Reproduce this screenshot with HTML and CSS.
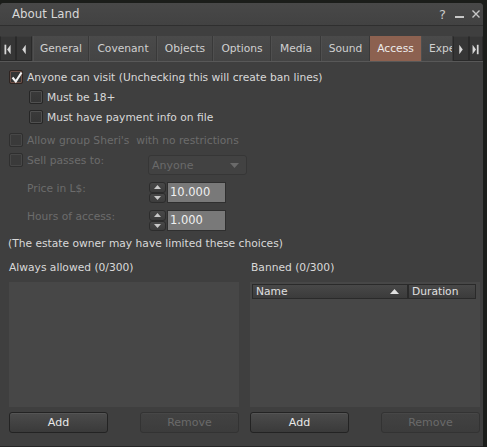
FILE: index.html
```html
<!DOCTYPE html>
<html>
<head>
<meta charset="utf-8">
<link rel="stylesheet" href="styles.css">
</head>
<body>
<div class="window">
  <div class="titlebar">
    <span class="title">About Land</span>
    <span class="tb-icons">
      <span class="tb-help">?</span>
      <svg class="tb-min" width="10" height="10" viewBox="0 0 10 10"><rect x="0" y="7" width="9" height="2" fill="#c8c8c8"/></svg>
      <svg class="tb-close" width="10" height="10" viewBox="0 0 10 10"><path d="M1.5 1.5 L8.5 8.5 M8.5 1.5 L1.5 8.5" stroke="#c8c8c8" stroke-width="1.4"/></svg>
    </span>
  </div>

  <div class="tabbar">
    <div class="tab-arrow">
      <svg width="16" height="25" viewBox="0 0 16 25"><rect x="4" y="7" width="2" height="11" fill="#d8d8d8"/><path d="M11 7 L7 12.5 L11 18 Z" fill="#d8d8d8"/></svg>
    </div>
    <div class="tab-arrow">
      <svg width="16" height="25" viewBox="0 0 16 25"><path d="M10 7 L6 12.5 L10 18 Z" fill="#d8d8d8"/></svg>
    </div>
    <div class="tabs">
      <div class="tab t-general">General</div>
      <div class="tab t-covenant">Covenant</div>
      <div class="tab t-objects">Objects</div>
      <div class="tab t-options">Options</div>
      <div class="tab t-media">Media</div>
      <div class="tab t-sound">Sound</div>
      <div class="tab t-access active">Access</div>
      <div class="tab t-exp">Expe</div>
    </div>
    <div class="tab-arrow">
      <svg width="16" height="25" viewBox="0 0 16 25"><path d="M6 7 L10 12.5 L6 18 Z" fill="#d8d8d8"/></svg>
    </div>
    <div class="tab-arrow last">
      <svg width="14" height="25" viewBox="0 0 14 25"><path d="M3 7 L7 12.5 L3 18 Z" fill="#d8d8d8"/><rect x="8" y="7" width="2" height="11" fill="#d8d8d8"/></svg>
    </div>
  </div>

  <div class="content">
    <div class="row r1">
      <span class="cb checked">
        <svg width="14" height="14" viewBox="0 0 14 14"><path d="M2.5 6.5 L5.8 10.5 L11.5 1.5" fill="none" stroke="#f2f2f2" stroke-width="2.1"/></svg>
      </span>
      <span class="label">Anyone can visit (Unchecking this will create ban lines)</span>
    </div>
    <div class="row indent">
      <span class="cb"></span>
      <span class="label">Must be 18+</span>
    </div>
    <div class="row indent">
      <span class="cb"></span>
      <span class="label">Must have payment info on file</span>
    </div>
    <div class="row r4 disabled">
      <span class="cb"></span>
      <span class="label">Allow group Sheri's&nbsp; with no restrictions</span>
    </div>
    <div class="sell-row disabled">
      <div class="sell-left">
        <span class="cb"></span>
        <span class="label">Sell passes to:</span>
      </div>
      <div class="combo">
        <span>Anyone</span>
        <svg width="9" height="5" viewBox="0 0 9 5"><path d="M0 0 L9 0 L4.5 5 Z" fill="#6a6a6a"/></svg>
      </div>
    </div>
    <div class="field-row price">
      <span class="field-label">Price in L$:</span>
      <div class="spinner">
        <span class="spin-btn"><svg width="7" height="4" viewBox="0 0 7 4"><path d="M0 4 L3.5 0 L7 4 Z" fill="#c8c8c8"/></svg></span>
        <span class="spin-btn"><svg width="7" height="4" viewBox="0 0 7 4"><path d="M0 0 L7 0 L3.5 4 Z" fill="#c8c8c8"/></svg></span>
      </div>
      <div class="num-input">10.000</div>
    </div>
    <div class="field-row hours">
      <span class="field-label">Hours of access:</span>
      <div class="spinner">
        <span class="spin-btn"><svg width="7" height="4" viewBox="0 0 7 4"><path d="M0 4 L3.5 0 L7 4 Z" fill="#c8c8c8"/></svg></span>
        <span class="spin-btn"><svg width="7" height="4" viewBox="0 0 7 4"><path d="M0 0 L7 0 L3.5 4 Z" fill="#c8c8c8"/></svg></span>
      </div>
      <div class="num-input">1.000</div>
    </div>
    <div class="note">(The estate owner may have limited these choices)</div>

    <div class="lists">
      <div class="list-col">
        <div class="list-title">Always allowed (0/300)</div>
        <div class="listbox"></div>
        <div class="btn-row">
          <div class="btn">Add</div>
          <div class="btn disabled-btn">Remove</div>
        </div>
      </div>
      <div class="list-col right">
        <div class="list-title">Banned (0/300)</div>
        <div class="listbox">
          <div class="list-header">
            <div class="col-name">
              <span>Name</span>
              <svg width="9" height="5" viewBox="0 0 9 5"><path d="M0 5 L4.5 0 L9 5 Z" fill="#e0e0e0"/></svg>
            </div>
            <div class="col-dur">Duration</div>
          </div>
        </div>
        <div class="btn-row">
          <div class="btn">Add</div>
          <div class="btn disabled-btn">Remove</div>
        </div>
      </div>
    </div>
  </div>
</div>
</body>
</html>
```

FILE: styles.css
```css
html, body {
  margin: 0;
  padding: 0;
}
body {
  background: #1b1d1a;
  width: 487px;
  height: 447px;
  overflow: hidden;
  font-family: "DejaVu Sans", "Liberation Sans", sans-serif;
  font-size: 10.7px;
  color: #d9d9d9;
}
.window {
  margin-top: 3px;
  width: 483px;
  height: 444px;
  background: #3f3f3f;
  border-radius: 4px 4px 0 0;
  display: flex;
  flex-direction: column;
  box-sizing: border-box;
  border-bottom: 1px solid #262626;
  overflow: hidden;
}
.titlebar {
  height: 22px;
  flex: none;
  display: flex;
  align-items: center;
  justify-content: space-between;
  padding-left: 12px;
  padding-right: 2px;
  background: linear-gradient(#484848, #424242);
  border-bottom: 1px solid #2f2f2f;
}
.title {
  font-size: 11.8px;
  color: #d8d8d8;
}
.tb-icons {
  display: flex;
  align-items: center;
}
.tb-help {
  font-size: 13px;
  color: #c8c8c8;
  margin-right: 9px;
}
.tb-min {
  margin-right: 6px;
}

.tabbar {
  margin-top: 10px;
  height: 25px;
  flex: none;
  display: flex;
  border-bottom: 1px solid #585858;
  background: #444;
}
.tab-arrow {
  width: 16px;
  height: 25px;
  flex: none;
  background: #363636;
  box-sizing: border-box;
  border: 1px solid #2a2a2a;
  border-top-color: #3c3c3c;
  display: flex;
}
.tab-arrow.last {
  width: 14px;
}
.tab-arrow svg {
  display: block;
}
.tabs {
  flex: 1;
  display: flex;
  overflow: hidden;
  padding-left: 1px;
}
.tab {
  flex: none;
  height: 25px;
  line-height: 25px;
  text-align: center;
  color: #d0d0d0;
  background: linear-gradient(#4a4a4a, #444444);
  box-sizing: border-box;
  border-right: 1px solid #393939;
  border-left: 1px solid #4f4f4f;
  white-space: nowrap;
}
.tab.active {
  background: #8c6150;
  border-color: #8c6150;
  color: #ececec;
}
.t-general { width: 56px; }
.t-covenant { width: 68px; }
.t-objects { width: 56px; }
.t-options { width: 58px; }
.t-media { width: 50px; }
.t-sound { width: 49px; }
.t-access { width: 51px; }
.t-exp { width: 32px; text-align: left; padding-left: 7px; overflow: hidden; }

.content {
  flex: 1;
  display: flex;
  flex-direction: column;
}
.row {
  height: 20px;
  display: flex;
  align-items: center;
  padding-left: 9px;
}
.row.r1 {
  margin-top: 5px;
}
.row.indent {
  padding-left: 29px;
}
.row.r4 {
  margin-top: 3px;
}
.cb {
  width: 14px;
  height: 14px;
  flex: none;
  box-sizing: border-box;
  border: 1px solid #262626;
  background: linear-gradient(#3a3a3a, #353535);
  box-shadow: inset 0 0 0 1px #505050;
  border-radius: 2px;
  display: flex;
}
.cb.checked {
  border-color: #2e2421;
  box-shadow: inset 0 0 0 1px #6e5047;
  background: #343434;
  overflow: visible;
}
.cb svg {
  display: block;
  overflow: visible;
}
.label {
  margin-left: 4px;
  white-space: nowrap;
}
.disabled .label,
.disabled .field-label {
  color: #6c6c6c;
}
.disabled .cb {
  border-color: #2f2f2f;
  box-shadow: inset 0 0 0 1px #474747;
  background: #3a3a3a;
}
.sell-row {
  height: 26px;
  display: flex;
  align-items: flex-start;
  padding-left: 9px;
}
.sell-left {
  width: 139px;
  display: flex;
  align-items: center;
  height: 14px;
  margin-top: 3px;
}
.combo {
  width: 99px;
  height: 20px;
  margin-top: 5px;
  box-sizing: border-box;
  border: 1px solid #363636;
  border-radius: 3px;
  background: #424242;
  color: #6a6a6a;
  display: flex;
  align-items: center;
  justify-content: space-between;
  padding: 0 7px 0 3px;
  font-size: 11px;
}
.field-row {
  height: 21px;
  display: flex;
  align-items: flex-start;
  padding-left: 27px;
}
.field-row.price {
  margin-top: 6px;
}
.field-row.hours {
  margin-top: 7px;
}
.field-label {
  width: 122px;
  line-height: 13px;
  color: #6c6c6c;
}
.spinner {
  width: 17px;
  height: 21px;
  display: flex;
  flex-direction: column;
  margin-right: 1px;
}
.spin-btn {
  flex: 1;
  box-sizing: border-box;
  border: 1px solid #2c2c2c;
  border-radius: 3px;
  background: linear-gradient(#484848, #3c3c3c);
  display: flex;
  align-items: center;
  justify-content: center;
}
.num-input {
  width: 59px;
  height: 21px;
  box-sizing: border-box;
  border: 1px solid #2f2f2f;
  background: #797979;
  color: #f0f0f0;
  font-size: 11.5px;
  line-height: 19px;
  padding-left: 2px;
}
.note {
  margin-top: 6px;
  line-height: 14px;
  padding-left: 8px;
}
.lists {
  margin-top: 10px;
  display: flex;
  padding-left: 9px;
  gap: 11px;
}
.list-col {
  width: 230px;
  display: flex;
  flex-direction: column;
}
.list-title {
  line-height: 14px;
  height: 14px;
}
.list-col.right .list-title {
  padding-left: 1px;
}
.listbox {
  margin-top: 7px;
  height: 125px;
  background: #474747;
  padding: 2px 4px 0 2px;
  box-sizing: border-box;
}
.list-header {
  height: 15px;
  display: flex;
  background: #2a2a2a;
  padding: 1px;
  gap: 2px;
  box-sizing: border-box;
}
.col-name,
.col-dur {
  background: linear-gradient(#484848, #3b3b3b);
  display: flex;
  align-items: center;
  line-height: 13px;
  padding-left: 3px;
  color: #e0e0e0;
  box-sizing: border-box;
}
.col-name {
  width: 154px;
  justify-content: space-between;
  padding-right: 8px;
}
.col-dur {
  flex: 1;
}
.btn-row {
  margin-top: 5px;
  display: flex;
  justify-content: space-between;
}
.btn {
  width: 99px;
  height: 21px;
  box-sizing: border-box;
  border: 1px solid #232323;
  border-radius: 3px;
  background: linear-gradient(#4b4b4b, #3a3a3a);
  box-shadow: inset 0 1px 0 #555;
  text-align: center;
  line-height: 19px;
  color: #e8e8e8;
  font-size: 11px;
}
.btn.disabled-btn {
  color: #6a6a6a;
  border-color: #333;
  background: linear-gradient(#424242, #3c3c3c);
  box-shadow: inset 0 1px 0 #474747;
}
```
